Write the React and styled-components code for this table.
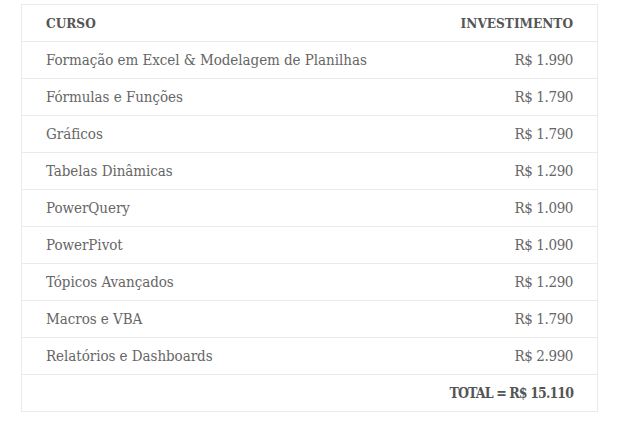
import React from "react";
import styled, { createGlobalStyle } from "styled-components";

const Global = createGlobalStyle`
  html, body { margin: 0; padding: 0; background: #fff; }
`;

const Page = styled.div`
  padding: 4px 0 0 21px;
`;

const Table = styled.table`
  width: 577px;
  box-sizing: border-box;
  table-layout: fixed;
  border-collapse: collapse;
  border: 1px solid #ebebeb;
  font-family: "DejaVu Serif Condensed", "DejaVu Serif", serif;
  font-size: 15px;
  color: #666;
`;

const Row = styled.tr`
  height: 37px;
  border-bottom: 1px solid #ebebeb;
`;

const Cell = styled.td`
  padding: 0 24px;
  text-align: ${(p) => (p.$right ? "right" : "left")};
  vertical-align: middle;
  white-space: nowrap;
  letter-spacing: ${(p) => (p.$right ? "-0.4px" : "-0.05px")};
`;

const TotalCell = styled.td`
  padding: 0 24px;
  text-align: right;
  font-weight: 700;
  font-size: 14px;
  letter-spacing: -0.9px;
  color: #555;
`;

const Head = styled.th`
  padding: 0 24px;
  text-align: ${(p) => (p.$right ? "right" : "left")};
  font-weight: 700;
  font-size: 13.5px;
  color: #555;
`;

const courses = [
  ["Formação em Excel & Modelagem de Planilhas", "R$ 1.990"],
  ["Fórmulas e Funções", "R$ 1.790"],
  ["Gráficos", "R$ 1.790"],
  ["Tabelas Dinâmicas", "R$ 1.290"],
  ["PowerQuery", "R$ 1.090"],
  ["PowerPivot", "R$ 1.090"],
  ["Tópicos Avançados", "R$ 1.290"],
  ["Macros e VBA", "R$ 1.790"],
  ["Relatórios e Dashboards", "R$ 2.990"],
];

export default function App() {
  return (
    <>
      <Global />
      <Page>
        <Table>
          <colgroup>
            <col style={{ width: "70%" }} />
            <col style={{ width: "30%" }} />
          </colgroup>
          <thead>
            <Row>
              <Head>CURSO</Head>
              <Head $right>INVESTIMENTO</Head>
            </Row>
          </thead>
          <tbody>
            {courses.map(([name, price]) => (
              <Row key={name}>
                <Cell>{name}</Cell>
                <Cell $right>{price}</Cell>
              </Row>
            ))}
            <Row>
              <TotalCell colSpan={2}>TOTAL = R$ 15.110</TotalCell>
            </Row>
          </tbody>
        </Table>
      </Page>
    </>
  );
}
